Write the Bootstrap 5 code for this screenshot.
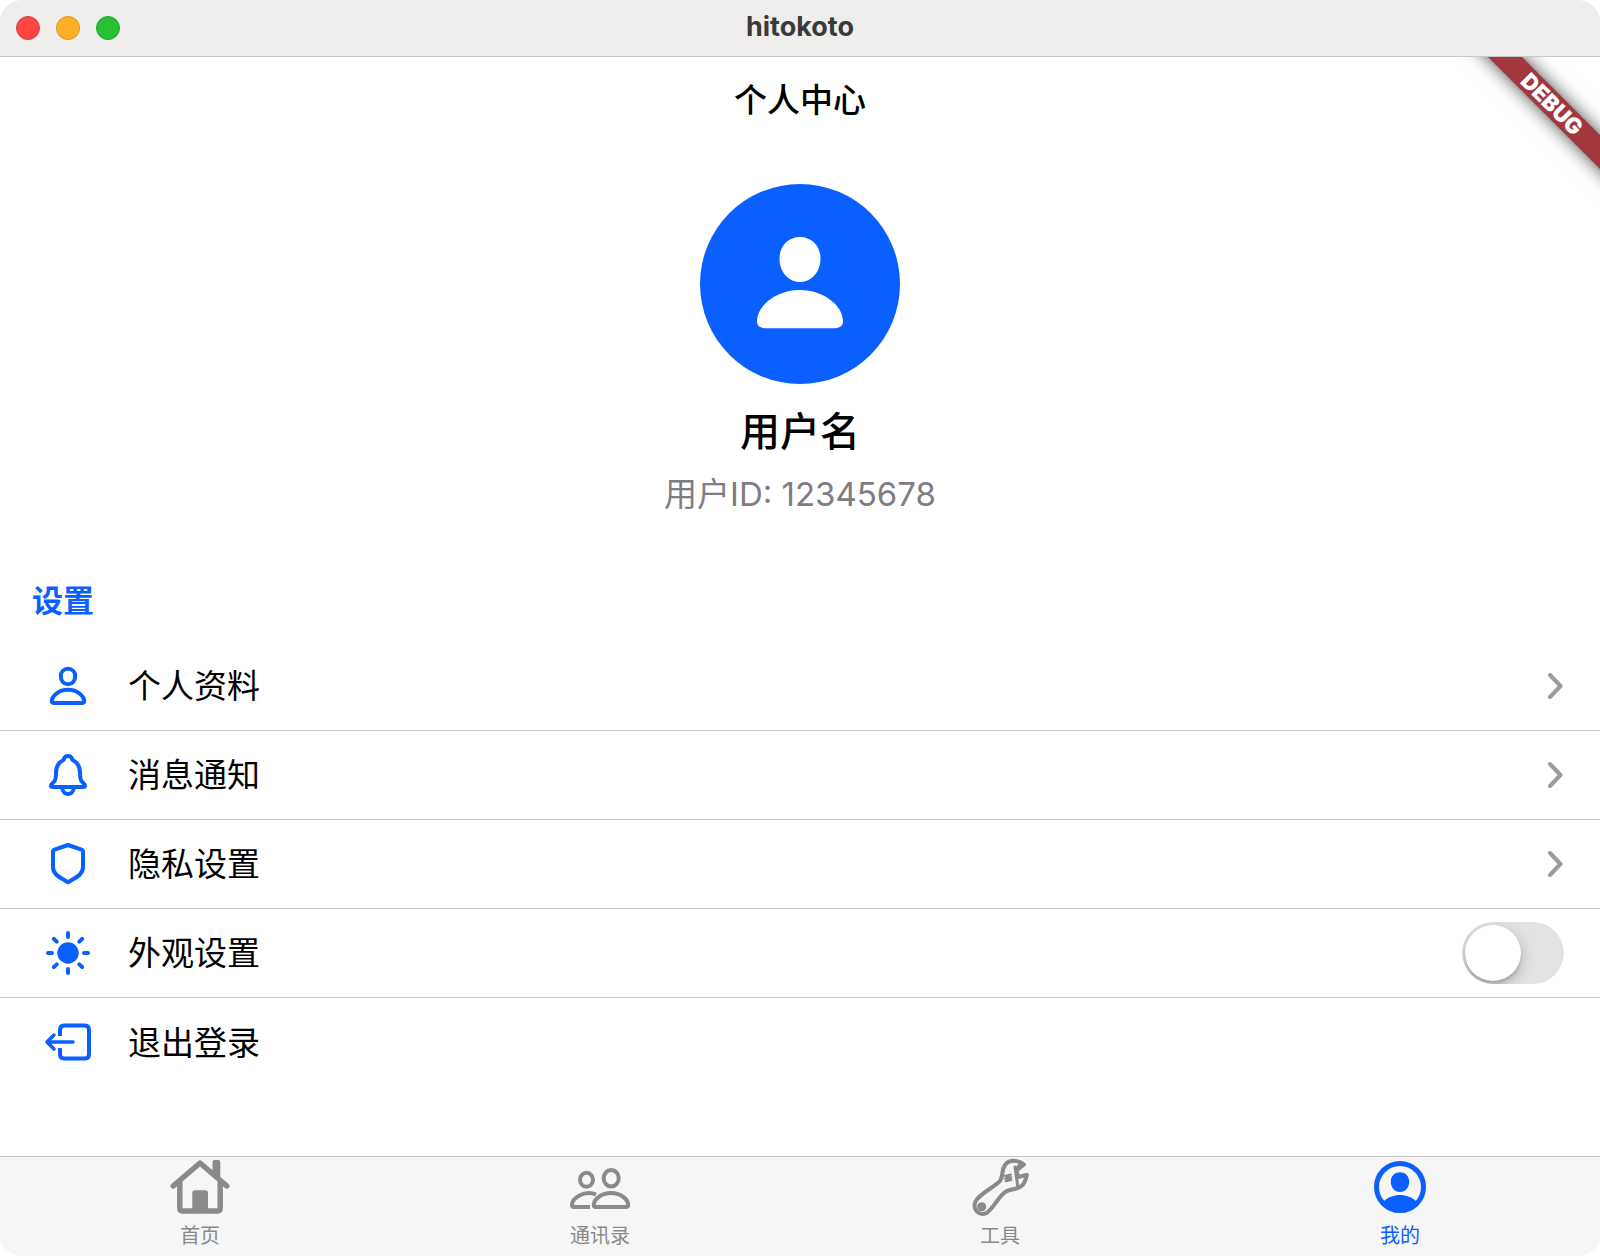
<!DOCTYPE html>
<html lang="zh-CN">
<head>
<meta charset="utf-8">
<meta name="viewport" content="width=device-width, initial-scale=1">
<title>hitokoto</title>
<link href="https://cdn.jsdelivr.net/npm/bootstrap@5.3.0/dist/css/bootstrap.min.css" rel="stylesheet">
<style>
:root { --accent: #0a60ff; --hairline: #c6c6c8; --muted: #8a8a8a; }
body { font-family: Inter, "Noto Sans CJK SC", sans-serif; color: #000; background: #fff; }
.app-window { min-height: 100vh; border-radius: 22px; background: #fff; }
.title-bar { height: 57px; background: #efeeec; border-bottom: 1px solid #c8c8c8; padding: 0 16px; }
.title-bar h1 { font-size: 27px; line-height: 32px; font-weight: 700; color: #3a3a3a; padding-bottom: 2px; }
.lights { gap: 16px; }
.light { width: 24px; height: 24px; border-radius: 50%; border: 1px solid; padding: 0; }
.light-close { background: #ff4645; border-color: #dd3b3c; }
.light-min { background: #fdb025; border-color: #d99420; }
.light-zoom { background: #28c131; border-color: #20a329; }
.spacer { width: 104px; }
.page-title { font-size: 33px; line-height: 48px; font-weight: 500; padding: 19px 0 60px; }
.avatar { width: 200px; height: 200px; }
.user-name { font-size: 40px; line-height: 56px; font-weight: 500; padding-top: 20px; }
.user-id { font-size: 33px; line-height: 48px; color: #7d7d82; padding-top: 10px; }
.section-title { font-size: 31px; line-height: 44px; font-weight: 700; color: var(--accent); padding: 0 32px; margin-top: 61px; margin-bottom: 19px; }
.setting { height: 89px; padding: 0 36px 0 44px; border-bottom: 1px solid var(--hairline); font-size: 33px; color: #000; gap: 36px; }
.setting:last-child { border-bottom: 0; }
.setting > .flex-grow-1 { padding-top: 2px; }
.setting svg { flex: none; }
.ico { width: 48px; height: 48px; fill: none; stroke: var(--accent); stroke-width: 4; stroke-linecap: round; stroke-linejoin: round; }
.chev { width: 16px; height: 30px; fill: none; stroke: #9b9ba0; stroke-width: 4; stroke-linecap: round; stroke-linejoin: round; }
.toggle { width: 102px; height: 62px; }
.toggle .form-check-input { width: 102px; height: 62px; border: 0; background-color: #e3e3e6; background-image: none; }
.toggle .form-check-input::before { content: ""; display: block; width: 56px; height: 56px; margin: 3px; border-radius: 50%; background: #fff; box-shadow: 0 5px 15px rgba(0,0,0,.22), 0 3px 3px rgba(0,0,0,.14); }
.toggle .form-check-input:checked { background-color: var(--accent); }
.toggle .form-check-input:checked::before { margin-left: 43px; }
.tab-bar { height: 100px; background: #f6f6f6; border-top: 1px solid var(--hairline); }
.tab-bar a { color: var(--muted); font-size: 20px; line-height: 28px; padding-top: 1px; gap: 4px; }
.tab-bar a.active { color: var(--accent); }
.tab-bar svg { width: 60px; height: 60px; fill: none; stroke: currentColor; stroke-width: 4; stroke-linecap: round; stroke-linejoin: round; }
.ribbon-area { width: 160px; height: 160px; top: 0; right: 0; pointer-events: none; }
.ribbon { width: 240px; height: 24px; left: -8px; top: 35px; transform: rotate(45deg); background: #a0383e; color: #fff; font-size: 22px; line-height: 24px; font-weight: 900; box-shadow: 0 0 18px rgba(0,0,0,.7); }
</style>
</head>
<body>
<div class="app-window d-flex flex-column overflow-hidden">
  <header class="title-bar d-flex align-items-center justify-content-between">
    <div class="lights d-flex">
      <button type="button" class="light light-close" aria-label="Close"></button>
      <button type="button" class="light light-min" aria-label="Minimize"></button>
      <button type="button" class="light light-zoom" aria-label="Zoom"></button>
    </div>
    <h1 class="m-0">hitokoto</h1>
    <div class="spacer"></div>
  </header>

  <main class="flex-grow-1 position-relative">
    <div class="ribbon-area position-absolute overflow-hidden">
      <div class="ribbon position-absolute text-center">DEBUG</div>
    </div>
    <h2 class="page-title text-center m-0">个人中心</h2>

    <section class="d-flex flex-column align-items-center">
      <svg class="avatar" viewBox="0 0 200 200" aria-hidden="true">
        <circle cx="100" cy="100" r="100" fill="#0a60ff"/>
        <path fill="#fff" d="M100 53C111.500 53 120.500 62 120.500 74.500C120.500 88 111.500 98 100 98C88.500 98 79.500 88 79.500 74.500C79.500 62 88.500 53 100 53ZM100 106C124 106 143 122 143 137C143 142 140 144.300 133 144.300H67C60 144.300 57 142 57 137C57 122 76 106 100 106Z"/>
      </svg>
      <div class="user-name">用户名</div>
      <div class="user-id">用户ID: 12345678</div>
    </section>

    <h3 class="section-title">设置</h3>
    <div>
      <a href="#" class="setting d-flex align-items-center text-decoration-none">
        <svg class="ico" viewBox="0 0 48 48"><path d="M24 6.800C28.200 6.800 31.200 10 31.200 14.300C31.200 18.800 28.200 22.300 24 22.300C19.800 22.300 16.800 18.800 16.800 14.300C16.800 10 19.800 6.800 24 6.800ZM24 27.800C34 27.800 40.200 34.500 40.200 39C40.200 40.600 39 41 37.500 41H10.500C9 41 7.800 40.600 7.800 39C7.800 34.500 14 27.800 24 27.800Z"/></svg>
        <span class="flex-grow-1">个人资料</span>
        <svg class="chev" viewBox="0 0 16 30"><path d="M2 4 12.500 15 2 26"/></svg>
      </a>
      <a href="#" class="setting d-flex align-items-center text-decoration-none">
        <svg class="ico" viewBox="0 0 48 48"><path d="M24 5C26.500 5 28 6.500 28.500 9C33.500 11.300 36 16 36 22C36 29 37.300 30.300 39.500 32.200C41 33.500 41.300 34.200 41 35.200C40.700 36 40 36 39 36H9C8 36 7.300 36 7 35.200C6.700 34.200 7 33.500 8.500 32.200C10.700 30.300 12 29 12 22C12 16 14.500 11.300 19.500 9C20 6.500 21.500 5 24 5ZM18.300 37C18.800 45 29.200 45 29.700 37"/></svg>
        <span class="flex-grow-1">消息通知</span>
        <svg class="chev" viewBox="0 0 16 30"><path d="M2 4 12.500 15 2 26"/></svg>
      </a>
      <a href="#" class="setting d-flex align-items-center text-decoration-none">
        <svg class="ico" viewBox="0 0 48 48"><path d="M24 5 37.500 9.600Q39 10.200 39 12V27C39 35 31.500 37.500 24 42.300C16.500 37.500 9 35 9 27V12Q9 10.200 10.500 9.600Z"/></svg>
        <span class="flex-grow-1">隐私设置</span>
        <svg class="chev" viewBox="0 0 16 30"><path d="M2 4 12.500 15 2 26"/></svg>
      </a>
      <label class="setting d-flex align-items-center" for="appearance">
        <svg class="ico" viewBox="0 0 48 48"><circle cx="24" cy="24" r="10.700" fill="#0a60ff" stroke="none"/><path d="M24 4V8M24 40V44M4 24H8M40 24H44M9.800 9.800 12.700 12.700M35.300 35.300 38.200 38.200M9.800 38.200 12.700 35.300M35.300 12.700 38.200 9.800"/></svg>
        <span class="flex-grow-1">外观设置</span>
        <span class="toggle form-switch d-block rounded-pill overflow-hidden p-0"><input class="form-check-input d-block float-none m-0" type="checkbox" role="switch" id="appearance"></span>
      </label>
      <a href="#" class="setting d-flex align-items-center text-decoration-none">
        <svg class="ico" viewBox="0 0 48 48"><path stroke-linecap="butt" d="M16 17V11Q16 6.500 20 6.500H41Q45 6.500 45 11V35Q45 39.500 41 39.500H20Q16 39.500 16 35V29"/><path stroke-width="3.500" d="M29 23H3.500M10 16 3 23 10 30"/></svg>
        <span class="flex-grow-1">退出登录</span>
      </a>
    </div>
  </main>

  <nav class="tab-bar d-flex">
    <a href="#" class="col d-flex flex-column align-items-center text-decoration-none">
      <svg viewBox="0 0 60 60"><path stroke-width="5.500" d="M3.200 28 30 5 56.800 28M9.800 25V50Q9.800 53 13 53H47Q50.200 53 50.200 50V25"/><path fill="currentColor" stroke="none" d="M22.300 53V35Q22.300 32.300 25 32.300H35.300Q38 32.300 38 35V53ZM42.500 15V4Q42.500 2 44.500 2H48.300Q50.300 2 50.300 4V22Z"/></svg>
      <span>首页</span>
    </a>
    <a href="#" class="col d-flex flex-column align-items-center text-decoration-none">
      <svg viewBox="0 0 60 60"><ellipse cx="41.200" cy="20.300" rx="7.500" ry="8.300"/><ellipse cx="16.500" cy="21.800" rx="6.500" ry="7"/><path d="M41 35C51.500 35 58.200 42 58.200 47Q58.200 49 56 49H26Q23.800 49 23.800 47C23.800 42 30.500 35 41 35Z"/><path stroke-linecap="butt" d="M26 36.500C14 32 2 40 2 47Q2 49 4 49H20"/></svg>
      <span>通讯录</span>
    </a>
    <a href="#" class="col d-flex flex-column align-items-center text-decoration-none">
      <svg viewBox="0 0 60 60"><path d="M54 6.500C48 1.500 39 1.500 35 7C31 12.500 33.500 18 30 23C26 28 9 36 5.500 43.500C2 51.500 9.500 58.500 16.500 55C24 50 28 38.500 36 33.500C41 30.500 47 32 51.500 28C54.500 25.500 56 21 56.800 17L48 19 46.500 12.500Z"/><path stroke-width="3" d="M45 9 47.700 28M47 10 51 5.500"/><path stroke-width="2" d="M34.500 18 41 16.500 35 20.800 41.500 19.300 35.500 23.300 41.500 22"/><circle cx="11.700" cy="48.700" r="4.500" fill="currentColor" stroke="none"/></svg>
      <span>工具</span>
    </a>
    <a href="#" class="col active d-flex flex-column align-items-center text-decoration-none" aria-current="page">
      <svg viewBox="0 0 60 60"><circle cx="30" cy="29" r="23.500" stroke-width="5"/><path fill="currentColor" stroke="none" d="M30 14.300C35.500 14.300 39.200 18.500 39.200 23.500C39.200 29.500 35.500 34 30 34C24.500 34 20.800 29.500 20.800 23.500C20.800 18.500 24.500 14.300 30 14.300ZM13 44C18 39 24 37 30 37C36 37 42 39 47 44C43 50 37 53.500 30 53.500C23 53.500 17 50 13 44Z"/></svg>
      <span>我的</span>
    </a>
  </nav>
</div>
<script src="https://cdn.jsdelivr.net/npm/bootstrap@5.3.0/dist/js/bootstrap.bundle.min.js"></script>
</body>
</html>
